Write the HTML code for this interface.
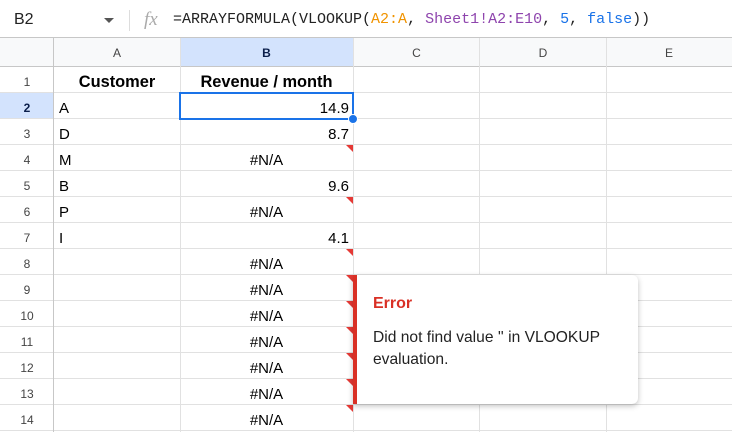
<!DOCTYPE html>
<html><head><meta charset="utf-8"><style>
*{margin:0;padding:0;box-sizing:border-box}
body{width:732px;height:432px;overflow:hidden;background:#fff;font-family:"Liberation Sans",Arial,sans-serif;position:relative}
.a{position:absolute}
.hl{position:absolute;left:0;width:732px;height:1px;background:#e1e1e1}
.vl{position:absolute;top:38px;width:1px;height:394px;background:#e1e1e1}
.rn{position:absolute;left:0;width:54px;text-align:center;font-size:12px;color:#444;height:26px;line-height:30px}
.c{position:absolute;height:26px;line-height:31px;font-size:15px;color:#000}
.tri{position:absolute;width:0;height:0;border-top:7px solid #e53935;border-left:7px solid transparent}
</style></head><body>
<div class="a" style="left:0;top:0;width:732px;height:37px;background:#fff"></div>
<div class="a" style="left:14px;top:11px;font-size:16px;color:#222">B2</div>
<div class="a" style="left:104px;top:18px;border-top:5px solid #555;border-left:5px solid transparent;border-right:5px solid transparent"></div>
<div class="a" style="left:129px;top:10px;width:1px;height:21px;background:#ddd"></div>
<div class="a" style="left:144px;top:9px;font-family:'Liberation Serif',serif;font-style:italic;font-size:19px;color:#aaa">fx</div>
<div class="a" style="left:173px;top:11px;font-family:'Liberation Mono',monospace;font-size:15px;color:#222;white-space:pre">=ARRAYFORMULA(VLOOKUP(<span style="color:#f09300">A2:A</span>, <span style="color:#8e44ad">Sheet1!A2:E10</span>, <span style="color:#1a73e8">5</span>, <span style="color:#1a73e8">false</span>))</div>
<div class="hl" style="top:37px;background:#c7c7c7"></div>
<div class="a" style="left:0;top:38px;width:54px;height:28px;background:#f8f9fa"></div>
<div class="a" style="left:54px;top:38px;width:678px;height:28px;background:#f8f9fa"></div>
<div class="a" style="left:180px;top:38px;width:173px;height:28px;background:#d3e3fd"></div>
<div class="a" style="left:0;top:93px;width:54px;height:26px;background:#d3e3fd"></div>
<div class="a" style="left:54px;top:38px;width:126px;text-align:center;line-height:30px;font-size:12px;color:#444">A</div>
<div class="a" style="left:180px;top:38px;width:173px;text-align:center;line-height:30px;font-size:12px;color:#0b1f4b;font-weight:bold">B</div>
<div class="a" style="left:353px;top:38px;width:127px;text-align:center;line-height:30px;font-size:12px;color:#444">C</div>
<div class="a" style="left:480px;top:38px;width:126px;text-align:center;line-height:30px;font-size:12px;color:#444">D</div>
<div class="a" style="left:606px;top:38px;width:126px;text-align:center;line-height:30px;font-size:12px;color:#444">E</div>
<div class="hl" style="top:66px;background:#c7c7c7"></div>
<div class="hl" style="top:92px"></div><div class="hl" style="top:118px"></div><div class="hl" style="top:144px"></div><div class="hl" style="top:170px"></div><div class="hl" style="top:196px"></div><div class="hl" style="top:222px"></div><div class="hl" style="top:248px"></div><div class="hl" style="top:274px"></div><div class="hl" style="top:300px"></div><div class="hl" style="top:326px"></div><div class="hl" style="top:352px"></div><div class="hl" style="top:378px"></div><div class="hl" style="top:404px"></div><div class="hl" style="top:430px"></div>
<div class="vl" style="left:53px;background:#c7c7c7"></div>
<div class="vl" style="left:180px"></div><div class="vl" style="left:353px"></div><div class="vl" style="left:479px"></div><div class="vl" style="left:606px"></div>
<div class="rn" style="top:67px">1</div><div class="rn" style="top:93px;font-weight:bold;color:#0b1f4b">2</div><div class="rn" style="top:119px">3</div><div class="rn" style="top:145px">4</div><div class="rn" style="top:171px">5</div><div class="rn" style="top:197px">6</div><div class="rn" style="top:223px">7</div><div class="rn" style="top:249px">8</div><div class="rn" style="top:275px">9</div><div class="rn" style="top:301px">10</div><div class="rn" style="top:327px">11</div><div class="rn" style="top:353px">12</div><div class="rn" style="top:379px">13</div><div class="rn" style="top:405px">14</div>
<div class="c" style="left:54px;top:67px;width:126px;text-align:center;font-weight:bold;font-size:16.4px">Customer</div>
<div class="c" style="left:180px;top:67px;width:173px;text-align:center;font-weight:bold;font-size:16.4px">Revenue / month</div>
<div class="c" style="left:59px;top:93px">A</div><div class="c" style="left:59px;top:119px">D</div><div class="c" style="left:59px;top:145px">M</div><div class="c" style="left:59px;top:171px">B</div><div class="c" style="left:59px;top:197px">P</div><div class="c" style="left:59px;top:223px">I</div>
<div class="c" style="left:180px;top:93px;width:169px;text-align:right">14.9</div>
<div class="c" style="left:180px;top:119px;width:169px;text-align:right">8.7</div>
<div class="c" style="left:180px;top:171px;width:169px;text-align:right">9.6</div>
<div class="c" style="left:180px;top:223px;width:169px;text-align:right">4.1</div>
<div class="c" style="left:180px;top:145px;width:173px;text-align:center">#N/A</div>
<div class="c" style="left:180px;top:197px;width:173px;text-align:center">#N/A</div>
<div class="c" style="left:180px;top:249px;width:173px;text-align:center">#N/A</div>
<div class="c" style="left:180px;top:275px;width:173px;text-align:center">#N/A</div>
<div class="c" style="left:180px;top:301px;width:173px;text-align:center">#N/A</div>
<div class="c" style="left:180px;top:327px;width:173px;text-align:center">#N/A</div>
<div class="c" style="left:180px;top:353px;width:173px;text-align:center">#N/A</div>
<div class="c" style="left:180px;top:379px;width:173px;text-align:center">#N/A</div>
<div class="c" style="left:180px;top:405px;width:173px;text-align:center">#N/A</div>
<div class="tri" style="left:346px;top:145px"></div><div class="tri" style="left:346px;top:197px"></div><div class="tri" style="left:346px;top:249px"></div><div class="tri" style="left:346px;top:275px"></div><div class="tri" style="left:346px;top:301px"></div><div class="tri" style="left:346px;top:327px"></div><div class="tri" style="left:346px;top:353px"></div><div class="tri" style="left:346px;top:379px"></div><div class="tri" style="left:346px;top:405px"></div>
<div class="a" style="left:179px;top:92px;width:175px;height:28px;border:2px solid #1a73e8"></div>
<div class="a" style="left:348px;top:114px;width:10px;height:10px;border-radius:50%;background:#1a73e8;border:1px solid #fff"></div>
<div class="a" style="left:353px;top:275px;width:285px;height:129px;background:#fff;border-left:4px solid #d93025;border-radius:0 6px 6px 0;box-shadow:0 2px 6px rgba(0,0,0,.25)"></div>
<div class="a" style="left:373px;top:295px;font-size:16px;font-weight:bold;color:#d93025">Error</div>
<div class="a" style="left:373px;top:327px;font-size:15.6px;color:#222;line-height:22px;width:260px">Did not find value '' in VLOOKUP evaluation.</div>
</body></html>
